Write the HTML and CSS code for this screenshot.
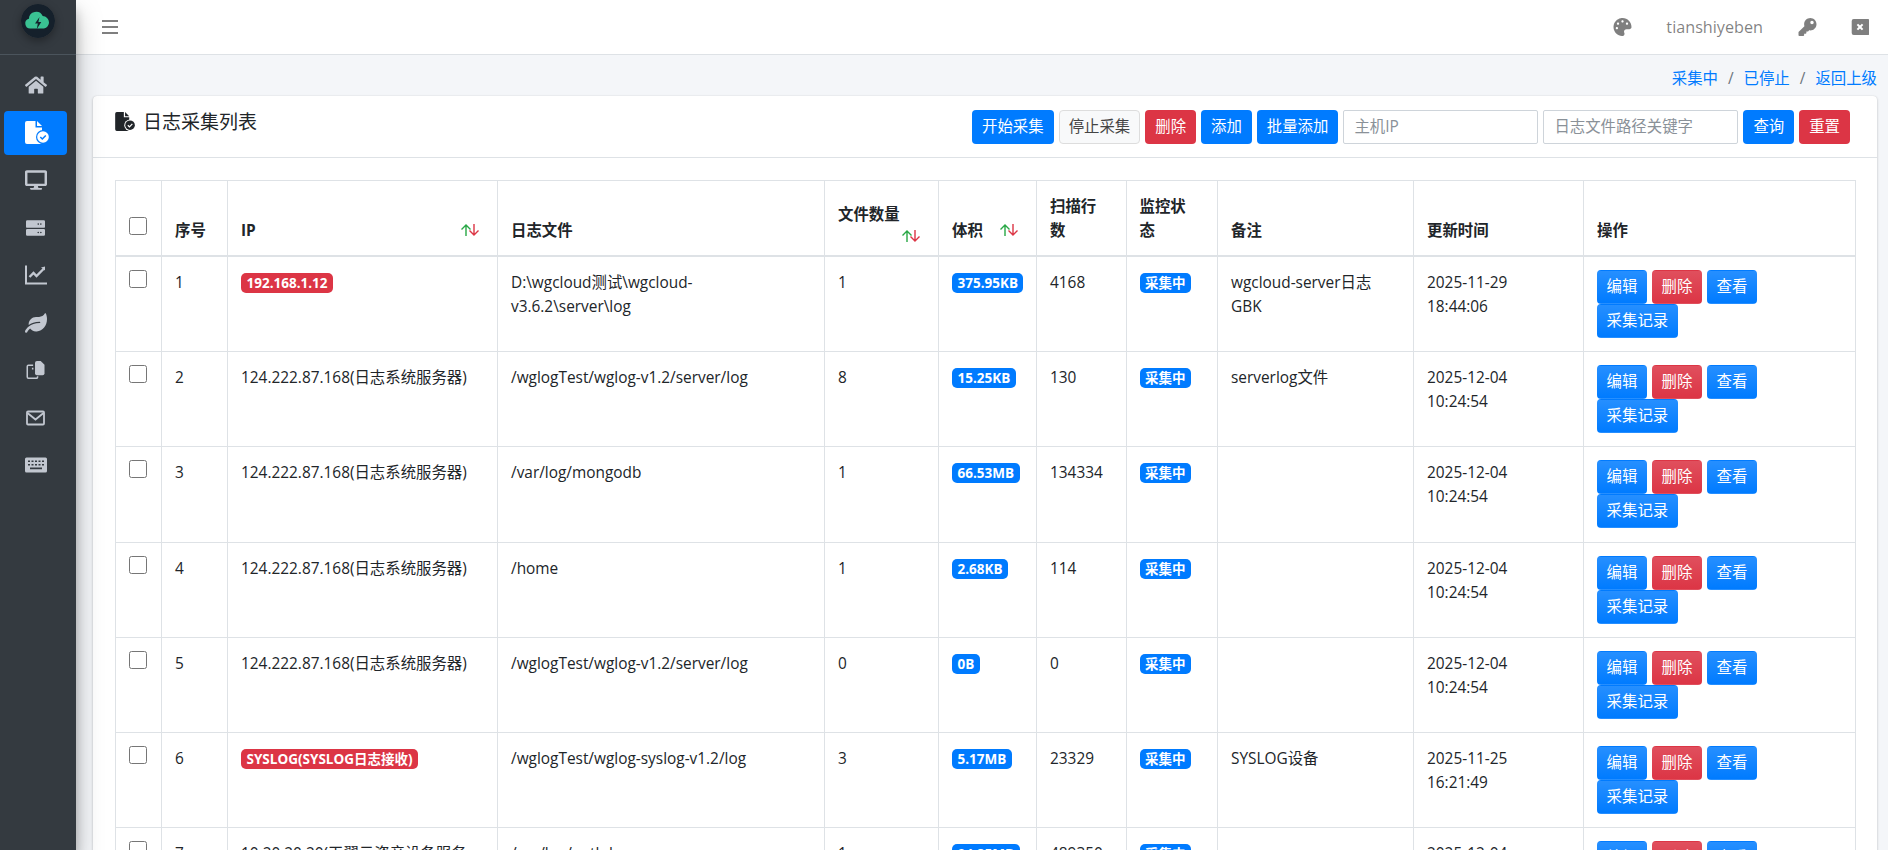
FILE: index.html
```html
<!DOCTYPE html>
<html lang="zh-CN">
<head>
    <meta charset="UTF-8">
    <title>日志采集列表</title>
    <link rel="stylesheet" href="styles.css">
</head>
<body>
<div class="wrapper">
    <aside class="sidebar">
        <div class="brand">
            <svg class="logo" viewBox="0 0 34 34"><circle cx="17" cy="17" r="17" fill="#15202b"/><path d="M9.500 24.500a5 5 0 0 1-1.600-9.800 7.200 7.200 0 0 1 13.800-2.600A6.400 6.400 0 0 1 28 18.300a6 6 0 0 1-5 6.200z" fill="#3ac293"/><path d="M18.500 13l-4.500 6.500h2.800L15.800 25l4.500-7h-2.900z" fill="#15202b"/></svg>
        </div>
        <nav class="menu">
            <a class="menu-item"><svg class="ico" viewBox="0 0 576 512"><path d="M280.37 148.26L96 300.11V464a16 16 0 0 0 16 16l112.06-.29a16 16 0 0 0 15.92-16V368a16 16 0 0 1 16-16h64a16 16 0 0 1 16 16v95.64a16 16 0 0 0 16 16.05L464 480a16 16 0 0 0 16-16V300L295.67 148.26a12.19 12.19 0 0 0-15.3 0zM571.6 251.47L488 182.56V44.05a12 12 0 0 0-12-12h-56a12 12 0 0 0-12 12v72.61L318.47 43a48 48 0 0 0-61 0L4.34 251.47a12 12 0 0 0-1.6 16.9l25.5 31A12 12 0 0 0 45.15 301l235.22-193.74a12.19 12.19 0 0 1 15.3 0L530.9 301a12 12 0 0 0 16.9-1.6l25.5-31a12 12 0 0 0-1.7-16.93z"/></svg></a>
            <a class="menu-item active"><svg class="ico ico-file" viewBox="0 0 25 23"><path d="M0 2a2 2 0 0 1 2-2h8.500v6.500H17V21a2 2 0 0 1-2 2H2a2 2 0 0 1-2-2z"/><path d="M12 0l5 5h-5z"/><circle cx="18" cy="16" r="7" fill="#007bff"/><circle cx="18" cy="16" r="5.800" fill="#fff"/><path d="M15.300 16l2 2 3.500-3.600" fill="none" stroke="#007bff" stroke-width="1.500"/></svg></a>
            <a class="menu-item"><svg class="ico" viewBox="0 0 576 512"><path d="M528 0H48C21.5 0 0 21.5 0 48v320c0 26.5 21.5 48 48 48h192l-16 48h-72c-13.3 0-24 10.700-24 24s10.700 24 24 24h272c13.300 0 24-10.700 24-24s-10.700-24-24-24h-72l-16-48h192c26.500 0 48-21.500 48-48V48c0-26.500-21.500-48-48-48zm-16 352H64V64h448v288z"/></svg></a>
            <a class="menu-item"><svg class="ico ico-sm" viewBox="0 0 512 416"><path fill-rule="evenodd" d="M32 0h448a32 32 0 0 1 32 32v140a32 32 0 0 1-32 32H32a32 32 0 0 1-32-32V32A32 32 0 0 1 32 0zm368 80a22 22 0 1 0 0 44 22 22 0 0 0 0-44zm-70 0a22 22 0 1 0 0 44 22 22 0 0 0 0-44zM32 232h448a32 32 0 0 1 32 32v120a32 32 0 0 1-32 32H32a32 32 0 0 1-32-32V264a32 32 0 0 1 32-32zm368 76a22 22 0 1 0 0 44 22 22 0 0 0 0-44zm-70 0a22 22 0 1 0 0 44 22 22 0 0 0 0-44z"/></svg></a>
            <a class="menu-item"><svg class="ico" viewBox="0 0 22 19"><path d="M1 0v18h21" fill="none" stroke="currentColor" stroke-width="2"/><path d="M4.500 11.500l4-4 3 3 7-7" fill="none" stroke="currentColor" stroke-width="2.400"/><path d="M16 2l4-1v4z"/></svg></a>
            <a class="menu-item"><svg class="ico" viewBox="0 0 576 512"><path d="M546.2 9.700c-5.600-12.500-21.600-13-28.300-1.200C486.900 62.400 431.400 96 368 96h-80C182 96 96 182 96 288c0 7 .8 13.700 1.500 20.500C161.300 262.800 253.400 224 384 224c8.800 0 16 7.200 16 16s-7.200 16-16 16C132.600 256 26 410.100 2.400 468c-6.600 16.300 1.200 34.900 17.500 41.600 16.400 6.800 35-1.100 41.800-17.300 1.500-3.600 20.900-47.900 71.900-90.600 32.400 43.900 94 85.800 174.900 77.200C465.500 467.500 576 326.700 576 154.300c0-50.200-10.800-102.200-29.800-144.600z"/></svg></a>
            <a class="menu-item"><svg class="ico ico-sm" viewBox="0 0 19 19"><path d="M11 0h4l4 4v9a2 2 0 0 1-2 2h-6a2 2 0 0 1-2-2V2a2 2 0 0 1 2-2z"/><path d="M7 4.500H2a1.200 1.200 0 0 0-1.200 1.200V17A1.200 1.200 0 0 0 2 18.200h8.500a1.200 1.200 0 0 0 1.200-1.200v-.8M6.500 7v2" fill="none" stroke="currentColor" stroke-width="1.600"/></svg></a>
            <a class="menu-item"><svg class="ico ico-sm" viewBox="0 0 19 15"><rect x="1" y="1" width="17" height="13" rx="1" fill="none" stroke="currentColor" stroke-width="1.800"/><path d="M1.500 2.500l8 6.500 8-6.500" fill="none" stroke="currentColor" stroke-width="1.800"/></svg></a>
            <a class="menu-item"><svg class="ico" viewBox="0 0 22 15"><path fill-rule="evenodd" d="M1.500 0h19A1.500 1.500 0 0 1 22 1.500v12a1.500 1.500 0 0 1-1.500 1.500h-19A1.500 1.500 0 0 1 0 13.500v-12A1.500 1.500 0 0 1 1.500 0zM3 3v1.500h2V3zm3.500 0v1.500h2V3zM10 3v1.500h2V3zm3.500 0v1.500h2V3zM17 3v1.500h2V3zM3 6.500V8h2V6.500zm3.500 0V8h2V6.500zm3.500 0V8h2V6.500zm3.500 0V8h2V6.500zm3.500 0V8h2V6.500zM5 10v1.700h12V10z"/></svg></a>
        </nav>
    </aside>

    <div class="main">
        <header class="topbar">
            <svg class="bars" viewBox="0 0 16 14"><path d="M0 1h16M0 7h16M0 13h16" stroke="currentColor" stroke-width="2"/></svg>
            <div class="topbar-right">
                <svg class="top-ico" viewBox="0 0 512 512"><path d="M204.3 5C104.9 24.4 24.8 104.3 5.2 203.4c-37 187 131.700 326.400 258.800 306.700 41.200-6.400 61.400-54.600 42.500-91.700-23.100-45.400 9.900-98.400 60.900-98.400h79.700c35.800 0 64.800-29.600 64.900-65.300C511.500 97.100 368.100-26.900 204.300 5zM96 320c-17.700 0-32-14.300-32-32s14.300-32 32-32 32 14.300 32 32-14.300 32-32 32zm32-128c-17.700 0-32-14.300-32-32s14.300-32 32-32 32 14.300 32 32-14.300 32-32 32zm128-64c-17.700 0-32-14.300-32-32s14.300-32 32-32 32 14.300 32 32-14.300 32-32 32zm128 64c-17.700 0-32-14.300-32-32s14.300-32 32-32 32 14.300 32 32-14.300 32-32 32z"/></svg>
                <span class="username">tianshiyeben</span>
                <svg class="top-ico" viewBox="0 0 512 512"><path d="M512 176.001C512 273.203 433.202 352 336 352c-11.220 0-22.190-1.062-32.827-3.069l-24.012 27.014A23.999 23.999 0 0 1 261.223 384H224v40c0 13.255-10.745 24-24 24h-40v40c0 13.255-10.745 24-24 24H24c-13.255 0-24-10.745-24-24v-78.059c0-6.365 2.529-12.470 7.029-16.971l161.802-161.802C163.108 213.814 160 195.271 160 176 160 78.798 238.797.001 335.999 0 433.488-.001 512 78.511 512 176.001zM336 128c0 26.510 21.490 48 48 48s48-21.490 48-48-21.490-48-48-48-48 21.490-48 48z"/></svg>
                <svg class="top-ico close-ico" viewBox="0 0 18 16"><path fill-rule="evenodd" d="M2 0h14a2 2 0 0 1 2 2v12a2 2 0 0 1-2 2H2a2 2 0 0 1-2-2V2a2 2 0 0 1 2-2zm4.400 4.700L5 6.100 6.900 8 5 9.900l1.400 1.400L8.300 9.400l1.900 1.900 1.400-1.400L9.700 8l1.900-1.900-1.400-1.400-1.900 1.900z" transform="translate(.7)"/></svg>
            </div>
        </header>

        <div class="content">
            <div class="crumbs">
                <a>采集中</a><span class="sep">/</span><a>已停止</a><span class="sep">/</span><a>返回上级</a>
            </div>

            <section class="card">
                <div class="card-header">
                    <h3 class="card-title">
                        <svg class="title-ico" viewBox="0 0 25 23"><path d="M0 2a2 2 0 0 1 2-2h8.500v6.500H17V21a2 2 0 0 1-2 2H2a2 2 0 0 1-2-2z"/><path d="M12 0l5 5h-5z"/><circle cx="18" cy="16" r="7" fill="#fff"/><circle cx="18" cy="16" r="5.800"/><path d="M15.300 16l2 2 3.500-3.600" fill="none" stroke="#fff" stroke-width="1.500"/></svg>
                        日志采集列表
                    </h3>
                    <div class="tools">
                        <button class="btn primary">开始采集</button>
                        <button class="btn light">停止采集</button>
                        <button class="btn danger">删除</button>
                        <button class="btn primary">添加</button>
                        <button class="btn primary">批量添加</button>
                        <input class="search" type="text" placeholder="主机IP">
                        <input class="search" type="text" placeholder="日志文件路径关键字">
                        <button class="btn primary">查询</button>
                        <button class="btn danger">重置</button>
                    </div>
                </div>
                <div class="card-body">
                    <table class="grid">
                        <colgroup>
                            <col class="c-check"><col class="c-no"><col class="c-ip"><col class="c-file"><col class="c-count"><col class="c-size"><col class="c-lines"><col class="c-state"><col class="c-note"><col class="c-time"><col class="c-ops">
                        </colgroup>
                        <thead>
                            <tr>
                                <th><input class="check check-head" type="checkbox"></th>
                                <th>序号</th>
                                <th>IP<svg class="sort" viewBox="0 0 20 12"><path d="M6 12V1M1.500 5.500L6 1l4.500 4.500" fill="none" stroke="#28a745" stroke-width="1.400"/><path d="M14 0v11M9.500 6.500L14 11l4.500-4.500" fill="none" stroke="#dc3545" stroke-width="1.400"/></svg></th>
                                <th>日志文件</th>
                                <th>文件数量<svg class="sort sort-block" viewBox="0 0 20 12"><path d="M6 12V1M1.500 5.500L6 1l4.500 4.500" fill="none" stroke="#28a745" stroke-width="1.400"/><path d="M14 0v11M9.500 6.500L14 11l4.500-4.500" fill="none" stroke="#dc3545" stroke-width="1.400"/></svg></th>
                                <th>体积<svg class="sort" viewBox="0 0 20 12"><path d="M6 12V1M1.500 5.500L6 1l4.500 4.500" fill="none" stroke="#28a745" stroke-width="1.400"/><path d="M14 0v11M9.500 6.500L14 11l4.500-4.500" fill="none" stroke="#dc3545" stroke-width="1.400"/></svg></th>
                                <th>扫描行<br>数</th>
                                <th>监控状<br>态</th>
                                <th>备注</th>
                                <th>更新时间</th>
                                <th>操作</th>
                            </tr>
                        </thead>
                        <tbody>
                            <tr>
                                <td><input class="check" type="checkbox"></td>
                                <td>1</td>
                                <td><span class="badge red">192.168.1.12</span></td>
                                <td>D:\wgcloud测试\wgcloud-<br>v3.6.2\server\log</td>
                                <td>1</td>
                                <td><span class="badge blue">375.95KB</span></td>
                                <td>4168</td>
                                <td><span class="badge blue">采集中</span></td>
                                <td>wgcloud-server日志<br>GBK</td>
                                <td>2025-11-29 18:44:06</td>
                                <td><div class="ops"><button class="btn primary grad">编辑</button><button class="btn danger grad">删除</button><button class="btn primary grad">查看</button><button class="btn primary grad">采集记录</button></div></td>
                            </tr>
                            <tr>
                                <td><input class="check" type="checkbox"></td>
                                <td>2</td>
                                <td>124.222.87.168(日志系统服务器)</td>
                                <td>/wglogTest/wglog-v1.2/server/log</td>
                                <td>8</td>
                                <td><span class="badge blue">15.25KB</span></td>
                                <td>130</td>
                                <td><span class="badge blue">采集中</span></td>
                                <td>serverlog文件</td>
                                <td>2025-12-04 10:24:54</td>
                                <td><div class="ops"><button class="btn primary grad">编辑</button><button class="btn danger grad">删除</button><button class="btn primary grad">查看</button><button class="btn primary grad">采集记录</button></div></td>
                            </tr>
                            <tr>
                                <td><input class="check" type="checkbox"></td>
                                <td>3</td>
                                <td>124.222.87.168(日志系统服务器)</td>
                                <td>/var/log/mongodb</td>
                                <td>1</td>
                                <td><span class="badge blue">66.53MB</span></td>
                                <td>134334</td>
                                <td><span class="badge blue">采集中</span></td>
                                <td></td>
                                <td>2025-12-04 10:24:54</td>
                                <td><div class="ops"><button class="btn primary grad">编辑</button><button class="btn danger grad">删除</button><button class="btn primary grad">查看</button><button class="btn primary grad">采集记录</button></div></td>
                            </tr>
                            <tr>
                                <td><input class="check" type="checkbox"></td>
                                <td>4</td>
                                <td>124.222.87.168(日志系统服务器)</td>
                                <td>/home</td>
                                <td>1</td>
                                <td><span class="badge blue">2.68KB</span></td>
                                <td>114</td>
                                <td><span class="badge blue">采集中</span></td>
                                <td></td>
                                <td>2025-12-04 10:24:54</td>
                                <td><div class="ops"><button class="btn primary grad">编辑</button><button class="btn danger grad">删除</button><button class="btn primary grad">查看</button><button class="btn primary grad">采集记录</button></div></td>
                            </tr>
                            <tr>
                                <td><input class="check" type="checkbox"></td>
                                <td>5</td>
                                <td>124.222.87.168(日志系统服务器)</td>
                                <td>/wglogTest/wglog-v1.2/server/log</td>
                                <td>0</td>
                                <td><span class="badge blue">0B</span></td>
                                <td>0</td>
                                <td><span class="badge blue">采集中</span></td>
                                <td></td>
                                <td>2025-12-04 10:24:54</td>
                                <td><div class="ops"><button class="btn primary grad">编辑</button><button class="btn danger grad">删除</button><button class="btn primary grad">查看</button><button class="btn primary grad">采集记录</button></div></td>
                            </tr>
                            <tr>
                                <td><input class="check" type="checkbox"></td>
                                <td>6</td>
                                <td><span class="badge red">SYSLOG(SYSLOG日志接收)</span></td>
                                <td>/wglogTest/wglog-syslog-v1.2/log</td>
                                <td>3</td>
                                <td><span class="badge blue">5.17MB</span></td>
                                <td>23329</td>
                                <td><span class="badge blue">采集中</span></td>
                                <td>SYSLOG设备</td>
                                <td>2025-11-25 16:21:49</td>
                                <td><div class="ops"><button class="btn primary grad">编辑</button><button class="btn danger grad">删除</button><button class="btn primary grad">查看</button><button class="btn primary grad">采集记录</button></div></td>
                            </tr>
                            <tr>
                                <td><input class="check" type="checkbox"></td>
                                <td>7</td>
                                <td>10.20.20.20(天翼云资产设备服务器)</td>
                                <td>/var/log/auth.log</td>
                                <td>1</td>
                                <td><span class="badge blue">94.85MB</span></td>
                                <td>489350</td>
                                <td><span class="badge blue">采集中</span></td>
                                <td></td>
                                <td>2025-12-04 10:24:54</td>
                                <td><div class="ops"><button class="btn primary grad">编辑</button><button class="btn danger grad">删除</button><button class="btn primary grad">查看</button><button class="btn primary grad">采集记录</button></div></td>
                            </tr>
                        </tbody>
                    </table>
                </div>
            </section>
        </div>
    </div>
</div>
</body>
</html>
```

FILE: styles.css
```css
html, body {
    height: 100%;
    margin: 0;
    overflow: hidden;
}
body {
    font-family: "Open Sans", "Noto Sans CJK SC", sans-serif;
    font-size: 15.4px;
    line-height: 24px;
    color: #212529;
    background-color: #f4f6f9;
}
.wrapper {
    display: flex;
    height: 100vh;
}

/* sidebar */
.sidebar {
    flex: 0 0 76px;
    background-color: #343a40;
    box-shadow: 0 14px 28px rgba(0,0,0,0.25), 0 10px 10px rgba(0,0,0,0.22);
    position: relative;
    z-index: 5;
}
.brand {
    height: 54px;
    border-bottom: 1px solid #4b545c;
    display: flex;
    justify-content: center;
}
.logo {
    width: 34px;
    height: 34px;
    margin-top: 4px;
    border-radius: 50%;
    box-shadow: 0 3px 8px rgba(0,0,0,0.35);
}
.menu {
    padding: 8px 9px 0 4px;
}
.menu-item {
    display: flex;
    align-items: center;
    justify-content: center;
    height: 44px;
    margin-bottom: 3.5px;
    border-radius: 4px;
    color: #c2c7d0;
}
.menu-item.active {
    background-color: #007bff;
    color: #fff;
}
.ico {
    width: 22px;
    height: 20px;
    fill: currentColor;
}
.ico-sm {
    width: 19px;
    height: 18px;
}
.ico-file {
    width: 25px;
    height: 23px;
    margin-left: 3px;
}

/* top bar */
.main {
    flex: 1;
    min-width: 0;
    display: flex;
    flex-direction: column;
}
.topbar {
    flex: 0 0 54px;
    display: flex;
    align-items: center;
    justify-content: space-between;
    background-color: #fff;
    border-bottom: 1px solid #dee2e6;
    padding: 0 19px 0 26px;
    color: rgba(0,0,0,0.5);
}
.bars {
    width: 16px;
    height: 14px;
}
.topbar-right {
    display: flex;
    align-items: center;
}
.top-ico {
    width: 19px;
    height: 18px;
    fill: currentColor;
}
.close-ico {
    width: 18px;
    margin-left: 34px;
}
.username {
    margin: 0 35px 0 34px;
    font-size: 16.2px;
}

/* content */
.content {
    flex: 1;
    padding: 0 11px 0 17px;
}
.crumbs {
    height: 41px;
    display: flex;
    align-items: center;
    justify-content: flex-end;
    padding-top: 6px;
    box-sizing: border-box;
    color: #007bff;
}
.sep {
    color: #6c757d;
    margin: 0 10px;
}
.card {
    background-color: #fff;
    border-radius: 4px;
    box-shadow: 0 0 1px rgba(0,0,0,0.125), 0 1px 3px rgba(0,0,0,0.2);
}
.card-header {
    height: 62px;
    box-sizing: border-box;
    display: flex;
    align-items: center;
    justify-content: space-between;
    padding: 0 27px 0 22px;
    border-bottom: 1px solid #dee2e6;
}
.card-title {
    margin: 0;
    font-size: 19px;
    font-weight: 400;
    display: flex;
    align-items: center;
    gap: 7px;
    position: relative;
    top: -5px;
}
.title-ico {
    width: 21px;
    height: 19px;
    fill: #212529;
}
.tools {
    display: flex;
    align-items: center;
    gap: 5px;
}
.btn {
    height: 34px;
    padding: 0 9px;
    border: 1px solid transparent;
    border-radius: 4px;
    font: inherit;
    color: #fff;
    white-space: nowrap;
}
.primary {
    background-color: #007bff;
}
.danger {
    background-color: #dc3545;
}
.light {
    background-color: #f8f9fa;
    border-color: #ddd;
    color: #444;
}
.primary.grad {
    background: linear-gradient(#268fff, #007bff);
}
.danger.grad {
    background: linear-gradient(#e04f5d, #dc3545);
}
.grad {
    padding: 0 8.6px;
}
.search {
    width: 195px;
    height: 34px;
    box-sizing: border-box;
    padding: 0 10px;
    border: 1px solid #ced4da;
    border-radius: 2px;
    font: inherit;
}
.search::placeholder {
    color: #8a9198;
}

/* table */
.card-body {
    padding: 22px 21px 0 22px;
}
.grid {
    width: 1741px;
    table-layout: fixed;
    border-collapse: collapse;
}
.c-check { width: 46px; }
.c-no { width: 66px; }
.c-ip { width: 270px; }
.c-file { width: 327px; }
.c-count { width: 114px; }
.c-size { width: 98px; }
.c-lines { width: 89.5px; }
.c-state { width: 91.5px; }
.c-note { width: 196px; }
.c-time { width: 170px; }
.c-ops { width: 272px; }
.grid th, .grid td {
    border: 1px solid #dee2e6;
    padding: 14px 13px 12px;
    text-align: left;
}
.grid th {
    height: 48px;
    vertical-align: bottom;
    font-weight: 700;
    border-bottom-width: 2px;
}
.grid td {
    height: 68.2px;
    vertical-align: top;
}
.check {
    display: block;
    width: 18px;
    height: 18px;
    margin: -1px 0 0;
}
.check-head {
    margin: 0 0 8px;
}
.sort {
    float: right;
    width: 20px;
    height: 12px;
    margin: 5px 4px 0 0;
}
.sort-block {
    float: none;
    display: block;
    margin: 3px 4px 1px auto;
}
.badge {
    display: inline-block;
    vertical-align: top;
    margin-top: 2px;
    padding: 0 5.5px;
    border-radius: 5px;
    font-size: 13.5px;
    font-weight: 700;
    line-height: 20px;
    color: #fff;
}
.red {
    background-color: #dc3545;
}
.blue {
    background-color: #007bff;
}
.ops {
    display: flex;
    flex-wrap: wrap;
    column-gap: 5px;
    max-width: 200px;
    margin-top: -1px;
}
```
